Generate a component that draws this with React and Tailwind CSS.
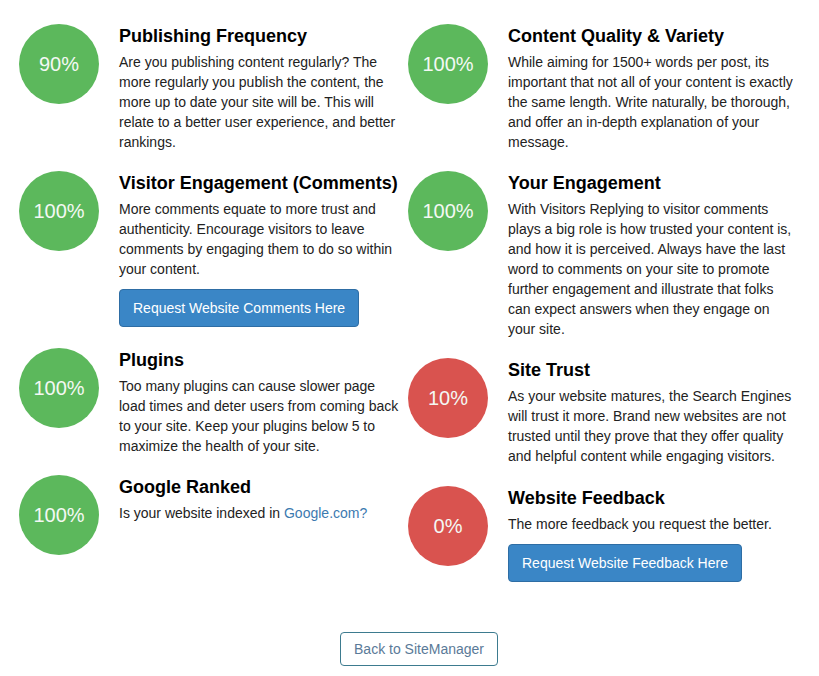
const left = [
  {
    score: '90%',
    good: true,
    title: 'Publishing Frequency',
    text: 'Are you publishing content regularly? The more regularly you publish the content, the more up to date your site will be. This will relate to a better user experience, and better rankings.',
  },
  {
    score: '100%',
    good: true,
    title: 'Visitor Engagement (Comments)',
    text: 'More comments equate to more trust and authenticity. Encourage visitors to leave comments by engaging them to do so within your content.',
    button: 'Request Website Comments Here',
  },
  {
    score: '100%',
    good: true,
    title: 'Plugins',
    text: 'Too many plugins can cause slower page load times and deter users from coming back to your site. Keep your plugins below 5 to maximize the health of your site.',
  },
  {
    score: '100%',
    good: true,
    title: 'Google Ranked',
    text: (
      <>
        Is your website indexed in{' '}
        <a href="#" className="text-[#3c7ab0]">
          Google.com?
        </a>
      </>
    ),
  },
]

const right = [
  {
    score: '100%',
    good: true,
    title: 'Content Quality & Variety',
    text: 'While aiming for 1500+ words per post, its important that not all of your content is exactly the same length. Write naturally, be thorough, and offer an in-depth explanation of your message.',
  },
  {
    score: '100%',
    good: true,
    title: 'Your Engagement',
    text: 'With Visitors Replying to visitor comments plays a big role is how trusted your content is, and how it is perceived. Always have the last word to comments on your site to promote further engagement and illustrate that folks can expect answers when they engage on your site.',
  },
  {
    score: '10%',
    good: false,
    title: 'Site Trust',
    text: 'As your website matures, the Search Engines will trust it more. Brand new websites are not trusted until they prove that they offer quality and helpful content while engaging visitors.',
  },
  {
    score: '0%',
    good: false,
    title: 'Website Feedback',
    text: 'The more feedback you request the better.',
    button: 'Request Website Feedback Here',
  },
]

function Item({ item, width, offset = '' }) {
  return (
    <div className={`flex items-start ${offset}`}>
      <div
        className={`w-20 h-20 shrink-0 rounded-full grid place-items-center text-[20px] text-[#f4f8f4] ${
          item.good ? 'bg-[#5cb85c]' : 'bg-[#d9534f]'
        }`}
      >
        {item.score}
      </div>
      <div className={`ml-5 ${width}`}>
        <h4 className="text-[18px] leading-5 font-bold text-black pt-[2px] mb-[6px]">{item.title}</h4>
        <p className="text-[14px] leading-5 text-[#222]">{item.text}</p>
        {item.button && (
          <button className="mt-[10px] mb-[2px] h-[38px] px-[13px] rounded bg-[#3a86c6] border border-[#2e6da4] text-[14px] text-white">
            {item.button}
          </button>
        )}
      </div>
    </div>
  )
}

export default function App() {
  return (
    <div className="w-[819px] h-[676px] bg-white pl-[19px] pt-6" style={{ fontFamily: '"Liberation Sans", Arial, sans-serif' }}>
      <div className="flex">
        <div className="w-[389px] flex flex-col gap-[19px]">
          {left.map((it) => (
            <Item key={it.title} item={it} width="w-[282px]" />
          ))}
        </div>
        <div className="w-[389px] flex flex-col gap-[19px]">
          {right.map((it, i) => (
            <Item key={it.title} item={it} width="w-[289px]" offset={i === 3 ? 'mt-px' : ''} />
          ))}
        </div>
      </div>
      <div className="flex justify-center mt-[48px]">
        <button className="h-[34px] px-[13px] rounded border border-[#3d7b8f] text-[14px] text-[#5a7a98] bg-white">
          Back to SiteManager
        </button>
      </div>
    </div>
  )
}
